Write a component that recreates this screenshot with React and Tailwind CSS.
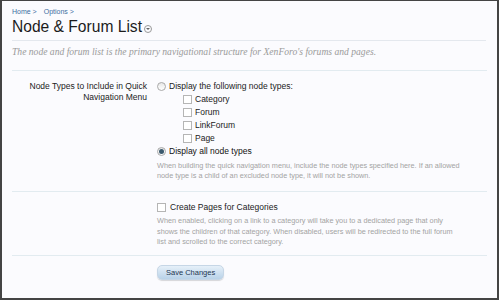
export default function App() {
  const font = { fontFamily: '"Liberation Sans", Arial, sans-serif' };
  const Radio = ({ checked }) => (
    <span className="inline-flex items-center justify-center w-[9px] h-[9px] rounded-full border border-[#a9a9a9] bg-gradient-to-b from-[#e8e8e8] to-[#ffffff] shrink-0">
      {checked && <span className="w-[5px] h-[5px] rounded-full bg-[#3b5a6e]" />}
    </span>
  );
  const Check = () => (
    <span className="inline-block w-[9px] h-[9px] border border-[#b5b5b5] bg-white shrink-0" />
  );
  return (
    <div className="w-[499px] h-[300px] bg-[#444] pt-px pl-[2px] pr-[2px] pb-[2px]" style={font}>
      <div className="w-full h-full bg-[#fbfbfe] px-[10px] overflow-hidden">
        <div className="pt-[6px] text-[7px] text-[#3c6ea1] leading-[9px] flex gap-[7px]">
          <span>Home &gt;</span>
          <span>Options &gt;</span>
        </div>
        <div className="flex items-end gap-[2px] mt-[1px] h-[20px]">
          <span className="text-[15.6px] leading-[20px] text-[#1c1c1c]">Node &amp; Forum List</span>
          <span className="mb-[4px] w-[8px] h-[8px] rounded-full border border-[#999] flex items-center justify-center">
            <span className="w-0 h-0 border-l-[2px] border-r-[2px] border-t-[2px] border-l-transparent border-r-transparent border-t-[#666]" />
          </span>
        </div>
        <div className="mt-[3px] border-t border-[#e4e8ee] w-[474px]" />
        <div
          className="mt-[5px] text-[9.6px] leading-[12px] italic text-[#9a9a9a] whitespace-nowrap"
          style={{ fontFamily: '"Liberation Serif", Georgia, serif' }}
        >
          The node and forum list is the primary navigational structure for XenForo's forums and pages.
        </div>
        <div className="mt-[12px] border-t border-[#e2ebf0] w-[475px]" />
        <div className="grid grid-cols-[135px_1fr] gap-x-[10px] pt-[10px] text-[8.5px] leading-[11px] text-[#222]">
          <div className="text-right">Node Types to Include in Quick Navigation Menu</div>
          <div>
            <label className="flex items-center gap-[3px] h-[11px]">
              <Radio />
              <span>Display the following node types:</span>
            </label>
            <div className="pl-[26px] pt-[1px]">
              {["Category", "Forum", "LinkForum", "Page"].map((t) => (
                <label key={t} className="flex items-center gap-[3px] h-[13px]">
                  <Check />
                  <span>{t}</span>
                </label>
              ))}
            </div>
            <label className="flex items-center gap-[3px] h-[11px] mt-[1px] text-[#111]">
              <Radio checked />
              <span>Display all node types</span>
            </label>
            <div className="text-[7.3px] leading-[10px] text-[#a3a3a3] mt-[4px] whitespace-nowrap">
              When building the quick navigation menu, include the node types specified here. If an allowed
              <br />
              node type is a child of an excluded node type, it will not be shown.
            </div>
          </div>
        </div>
        <div className="mt-[10px] border-t border-[#e2ebf0] w-[475px]" />
        <div className="grid grid-cols-[135px_1fr] gap-x-[10px] pt-[10px] text-[8.5px] leading-[11px] text-[#222]">
          <div />
          <div>
            <label className="flex items-center gap-[4px] h-[11px]">
              <Check />
              <span>Create Pages for Categories</span>
            </label>
            <div className="text-[7.3px] leading-[10.5px] text-[#a3a3a3] mt-[3px] whitespace-nowrap">
              When enabled, clicking on a link to a category will take you to a dedicated page that only
              <br />
              shows the children of that category. When disabled, users will be redirected to the full forum
              <br />
              list and scrolled to the correct category.
            </div>
          </div>
        </div>
        <div className="mt-[7px] border-t border-[#e2ebf0] w-[475px]" />
        <div className="grid grid-cols-[135px_1fr] gap-x-[10px] pt-[9px]">
          <div />
          <div className="flex">
            <button className="h-[15px] px-[8px] rounded-[5px] text-[7.5px] leading-[13px] text-[#1d3550] bg-gradient-to-b from-[#e6f0f9] to-[#b9d2e8] border border-[#c6d6e6] shadow-[0_1px_1px_rgba(0,0,0,0.15)]">
              Save Changes
            </button>
          </div>
        </div>
      </div>
    </div>
  );
}
